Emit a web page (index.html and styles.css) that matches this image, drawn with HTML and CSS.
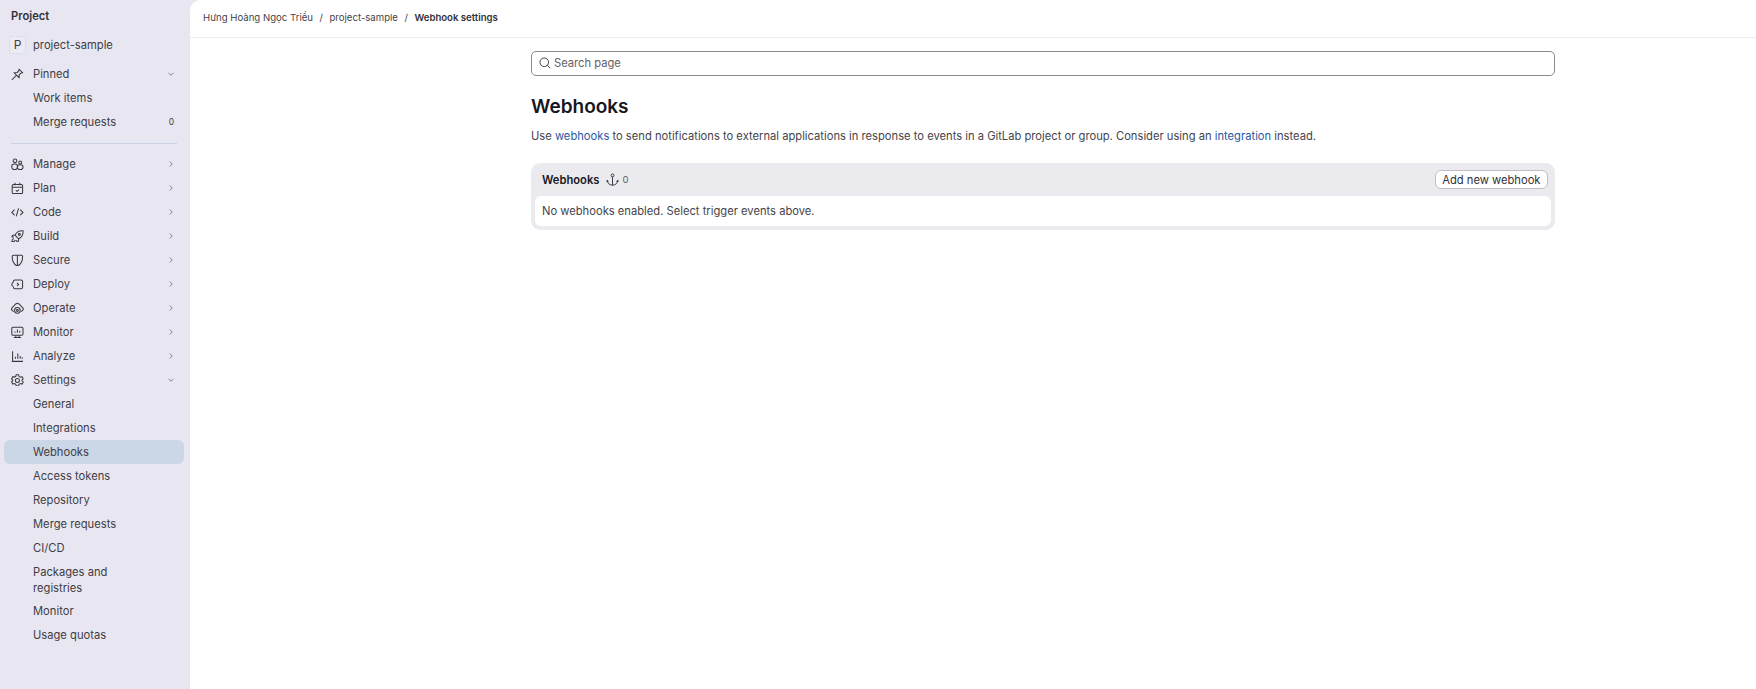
FILE: index.html
```html
<!DOCTYPE html>
<html lang="en">
<head>
  <meta charset="UTF-8">
  <meta name="viewport" content="width=device-width, initial-scale=1.0">
  <title>Webhook settings</title>
  <link rel="stylesheet" href="styles.css">
</head>
<body>
  <div class="app">
    <aside class="sidebar">
      <div class="sidebar-title">Project</div>
      <a class="nav-item project-link" href="#"><span class="avatar">P</span>project-sample</a>

      <a class="nav-item" href="#">
        <svg class="nav-icon" viewBox="0 0 16 16"><path d="M9.5 1l5.5 5.5M10.5 2L8 5.5 4 6l6 6 .5-4L14 5.5M7 9l-6 6"/></svg>
        Pinned
        <svg class="chevron" viewBox="0 0 16 16"><path d="M4 6l4 4 4-4"/></svg>
      </a>
      <a class="nav-item" href="#">Work items</a>
      <a class="nav-item" href="#">Merge requests<span class="count">0</span></a>
      <hr class="divider">

      <a class="nav-item" href="#">
        <svg class="nav-icon" viewBox="0 0 16 16"><circle cx="5" cy="3.5" r="2.3"/><circle cx="11.5" cy="5.5" r="1.8"/><rect x="1" y="7.5" width="7" height="7" rx="2.8"/><rect x="8" y="8.5" width="7" height="6" rx="2.8"/></svg>
        Manage
        <svg class="chevron" viewBox="0 0 16 16"><path d="M6 4l4 4-4 4"/></svg>
      </a>
      <a class="nav-item" href="#">
        <svg class="nav-icon" viewBox="0 0 16 16"><rect x="1.5" y="3" width="13" height="11.5" rx="1.5"/><path d="M1.5 6.5h13M5 1v3M11 1v3M6 10.5l1.5 1.2L10 9.500"/></svg>
        Plan
        <svg class="chevron" viewBox="0 0 16 16"><path d="M6 4l4 4-4 4"/></svg>
      </a>
      <a class="nav-item" href="#">
        <svg class="nav-icon" viewBox="0 0 16 16"><path d="M4.5 4.5L1 8l3.5 3.5M11.5 4.5L15 8l-3.5 3.5M9.5 3l-3 10"/></svg>
        Code
        <svg class="chevron" viewBox="0 0 16 16"><path d="M6 4l4 4-4 4"/></svg>
      </a>
      <a class="nav-item" href="#">
        <svg class="nav-icon" viewBox="0 0 16 16"><path d="M15 1c-4.5-.5-8 1.5-10 5.5L9.5 11c4-2 6-5.5 5.5-10zM5 6.5c-2-.5-3.500 0-4 2l2.5.5M9.5 11c.5 2 0 3.500-2 4L7 12.500M3.5 10.500C2 11 1 13 1 15c2 0 4-1 4.5-2.500"/><circle cx="10.5" cy="5.5" r="1.2"/></svg>
        Build
        <svg class="chevron" viewBox="0 0 16 16"><path d="M6 4l4 4-4 4"/></svg>
      </a>
      <a class="nav-item" href="#">
        <svg class="nav-icon" viewBox="0 0 16 16"><path d="M3 1.5h10A1.5 1.5 0 0 1 14.500 3c0 6-2 10-6.500 12C3.500 13 1.5 9 1.5 3A1.500 1.500 0 0 1 3 1.500zM8 1.500V15"/></svg>
        Secure
        <svg class="chevron" viewBox="0 0 16 16"><path d="M6 4l4 4-4 4"/></svg>
      </a>
      <a class="nav-item" href="#">
        <svg class="nav-icon" viewBox="0 0 16 16"><path d="M3 5.5v-1a2 2 0 0 1 2-2h7.5a2 2 0 0 1 2 2v7a2 2 0 0 1-2 2H5a2 2 0 0 1-2-2v-1M7.5 6l2 2-2 2M2 5.5c-1 1.500-1 3.500 0 5"/></svg>
        Deploy
        <svg class="chevron" viewBox="0 0 16 16"><path d="M6 4l4 4-4 4"/></svg>
      </a>
      <a class="nav-item" href="#">
        <svg class="nav-icon" viewBox="0 0 16 16"><path d="M3.5 12L1.500 10.500C.5 9.500.5 8 1.500 7l4.500-4.500c1.200-1 2.800-1 4 0L14.500 7c1 1 1 2.500 0 3.500L12.500 12"/><circle cx="8" cy="10.500" r="3.500"/><circle cx="8" cy="10.500" r="1.200"/></svg>
        Operate
        <svg class="chevron" viewBox="0 0 16 16"><path d="M6 4l4 4-4 4"/></svg>
      </a>
      <a class="nav-item" href="#">
        <svg class="nav-icon" viewBox="0 0 16 16"><rect x="1" y="1.5" width="14" height="10" rx="1.5"/><path d="M5 8.500V7M8 8.500V4.500M11 8.500V6M6 11.500V14M10 11.500V14M3.500 14.500h9"/></svg>
        Monitor
        <svg class="chevron" viewBox="0 0 16 16"><path d="M6 4l4 4-4 4"/></svg>
      </a>
      <a class="nav-item" href="#">
        <svg class="nav-icon" viewBox="0 0 16 16"><path d="M2 1.500V13a1 1 0 0 0 1 1h12M1 14.500h14M5.500 11V8.500M8.500 11V4.500M11.500 11V7.500M14 11V9"/></svg>
        Analyze
        <svg class="chevron" viewBox="0 0 16 16"><path d="M6 4l4 4-4 4"/></svg>
      </a>
      <a class="nav-item" href="#">
        <svg class="nav-icon" viewBox="0 0 16 16"><path d="M6.500 1h3l.5 2 1.800 1 2-.6 1.500 2.600-1.500 1.500v1l1.500 1.500-1.500 2.600-2-.6-1.800 1-.5 2h-3l-.5-2-1.800-1-2 .6L.7 9.900l1.500-1.500v-1L.7 5.900 2.200 3.300l2 .6 1.800-1z"/><circle cx="8" cy="8" r="2.500"/></svg>
        Settings
        <svg class="chevron" viewBox="0 0 16 16"><path d="M4 6l4 4 4-4"/></svg>
      </a>
      <a class="nav-item" href="#">General</a>
      <a class="nav-item" href="#">Integrations</a>
      <a class="nav-item active" href="#">Webhooks</a>
      <a class="nav-item" href="#">Access tokens</a>
      <a class="nav-item" href="#">Repository</a>
      <a class="nav-item" href="#">Merge requests</a>
      <a class="nav-item" href="#">CI/CD</a>
      <a class="nav-item two-lines" href="#"><span>Packages and<br>registries</span></a>
      <a class="nav-item" href="#">Monitor</a>
      <a class="nav-item" href="#">Usage quotas</a>
    </aside>

    <div class="main">
      <header class="topbar">
        <a href="#">Hưng Hoàng Ngọc Triều</a>
        <span class="sep">/</span>
        <a href="#">project-sample</a>
        <span class="sep">/</span>
        <strong>Webhook settings</strong>
      </header>

      <div class="container">
        <div class="search-box">
          <svg class="search-icon" viewBox="0 0 16 16"><circle cx="7" cy="7" r="5.7"/><path d="M11 11l4 4"/></svg>
          <span>Search page</span>
        </div>

        <h1>Webhooks</h1>
        <p class="intro">Use <a href="#">webhooks</a> to send notifications to external applications in response to events in a GitLab project or group. Consider using an <a href="#">integration</a> instead.</p>

        <section class="card">
          <div class="card-header">
            <strong>Webhooks</strong>
            <svg class="anchor-icon" viewBox="0 0 16 16"><circle cx="8" cy="3" r="1.8"/><path d="M8 4.800V15M1.500 9c0 3.500 3 6 6.500 6s6.500-2.500 6.500-6M.3 10.500L1.500 9l1.700 1.500M12.800 10.500L14.500 9l1.200 1.500"/></svg>
            <span class="card-count">0</span>
            <button class="add-button" type="button">Add new webhook</button>
          </div>
          <div class="card-body">No webhooks enabled. Select trigger events above.</div>
        </section>
      </div>
    </div>
  </div>
</body>
</html>
```

FILE: styles.css
```css
* {
  box-sizing: border-box;
}

html, body {
  height: 100%;
}

body {
  margin: 0;
  font-family: Inter, "Noto Sans", sans-serif;
  font-size: 11.2px;
  color: #45444b;
  background-color: #e8e7f1;
}

a {
  color: inherit;
  text-decoration: none;
}

.app {
  display: flex;
  height: 689px;
  overflow: hidden;
}

.sidebar {
  width: 190px;
  flex-shrink: 0;
  padding: 8px 6px 0 4px;
  background-color: #e8e7f1;
}

.sidebar-title {
  height: 16px;
  margin-bottom: 9px;
  padding-left: 7px;
  font-weight: 600;
  line-height: 16px;
  color: #333238;
}

.nav-item {
  display: flex;
  align-items: center;
  position: relative;
  height: 24px;
  padding: 0 10px 0 29px;
  border-radius: 6px;
  color: #3f3d45;
}

.nav-item.active {
  background-color: #cbd6e6;
}

.nav-item.two-lines {
  height: 39px;
  line-height: 16px;
}

.project-link {
  margin-bottom: 5px;
}

.avatar {
  position: absolute;
  left: 5px;
  top: 3px;
  width: 17px;
  height: 18px;
  border: 1px dotted #cbd6e6;
  border-radius: 3px;
  background-color: #ecebf3;
  font-size: 12px;
  text-align: center;
  line-height: 16px;
}

.nav-icon {
  position: absolute;
  left: 7px;
  top: 5.6px;
  width: 12.8px;
  height: 12.8px;
  fill: none;
  stroke: #3a383f;
  stroke-width: 1.3;
}

.chevron {
  width: 10px;
  height: 10px;
  margin-left: auto;
  margin-right: -2px;
  fill: none;
  stroke: #737278;
  stroke-width: 1.4;
}

.count {
  margin-left: auto;
  font-size: 8.5px;
}

.divider {
  height: 1px;
  margin: 9px 7px 8px;
  border: none;
  background-color: #c9d3e4;
}

.main {
  flex: 1;
  min-width: 0;
  background-color: #fff;
  border-top-left-radius: 10px;
}

.topbar {
  display: flex;
  align-items: center;
  gap: 6.5px;
  height: 38px;
  padding: 0 0 3px 13px;
  border-bottom: 1px solid #ececef;
  font-size: 9.6px;
  color: #45434a;
}

.topbar strong {
  font-weight: 600;
  color: #333238;
}

.container {
  width: 1024px;
  margin-left: 341px;
  padding-top: 13px;
}

.search-box {
  display: flex;
  align-items: center;
  gap: 3px;
  height: 25px;
  padding: 0 0 1px 7px;
  border: 1px solid #89888d;
  border-radius: 5px;
  color: #626168;
}

.search-icon {
  width: 12px;
  height: 12px;
  fill: none;
  stroke: #3a383f;
  stroke-width: 1.3;
}

h1 {
  margin: 17px 0 0;
  font-size: 19px;
  font-weight: 600;
  line-height: 28px;
  color: #18171d;
}

.intro {
  margin: 6px 0 0;
  line-height: 18px;
}

.intro a {
  color: #2a5aa5;
}

.card {
  margin-top: 18px;
  padding: 0 4px 4px;
  border-radius: 9px;
  background-color: #ebebef;
}

.card-header {
  display: flex;
  align-items: center;
  height: 33px;
  padding-left: 7px;
}

.card-header strong {
  font-weight: 600;
  color: #18171d;
}

.anchor-icon {
  width: 13px;
  height: 13px;
  margin-left: 7px;
  fill: none;
  stroke: #3a383f;
  stroke-width: 1.2;
}

.card-count {
  margin-left: 3px;
  font-size: 9.6px;
  color: #626168;
}

.add-button {
  height: 19px;
  margin-left: auto;
  margin-right: 3px;
  padding: 0 6.5px;
  border: 1px solid #bfbfc3;
  border-radius: 6px;
  background-color: #fff;
  font-family: inherit;
  font-size: 11.2px;
  color: #333238;
}

.card-body {
  display: flex;
  align-items: center;
  height: 30px;
  padding-left: 7px;
  border-radius: 6px;
  background-color: #fff;
}
```
